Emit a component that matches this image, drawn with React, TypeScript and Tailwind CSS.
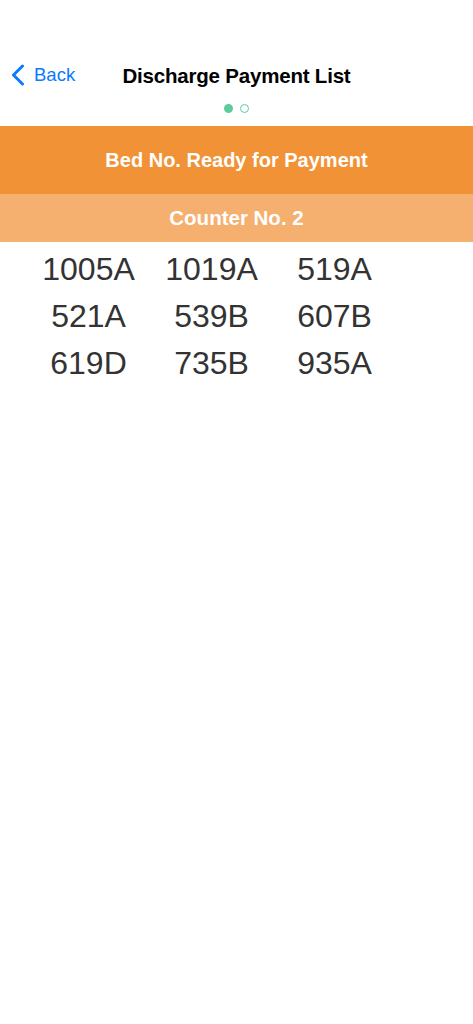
import React from 'react';

const beds = ['1005A', '1019A', '519A', '521A', '539B', '607B', '619D', '735B', '935A'];

export default function App() {
  return (
    <div className="w-[473px] h-[1024px] bg-white font-['Liberation_Sans',Arial,sans-serif]">
      {/* status bar space */}
      <div className="h-[50px]" />

      {/* nav bar */}
      <div className="relative h-[50px] flex items-center justify-center">
        <button className="absolute left-[11px] top-0 h-full flex items-center gap-[9px] text-[#0a7aff]">
          <svg width="14" height="22" viewBox="0 0 14 22" fill="none">
            <path d="M11.5 2 L2.5 11 L11.5 20" stroke="#0a7aff" strokeWidth="3" strokeLinecap="round" strokeLinejoin="round" />
          </svg>
          <span className="text-[18.5px] leading-none">Back</span>
        </button>
        <h1 className="text-[20.5px] font-bold text-black leading-none tracking-[-0.2px] pt-[2px]">Discharge Payment List</h1>
      </div>

      {/* page dots */}
      <div className="h-[26px] flex items-start justify-center gap-[7px] pt-[4px]">
        <span className="w-[9px] h-[9px] rounded-full bg-[#5ecb9c]" />
        <span className="w-[9px] h-[9px] rounded-full border-[1.5px] border-[#5ecb9c]" />
      </div>

      {/* headers */}
      <div className="h-[68px] bg-[#f19236] flex items-center justify-center">
        <span className="text-white text-[20px] font-bold">Bed No. Ready for Payment</span>
      </div>
      <div className="h-[48px] bg-[#f5b070] flex items-center justify-center">
        <span className="text-white text-[20.5px] font-bold">Counter No. 2</span>
      </div>

      {/* bed list */}
      <div className="pl-[27px] pt-[3px] grid grid-cols-[123px_123px_123px]">
        {beds.map((b) => (
          <div key={b} className="h-[47px] flex items-center justify-center text-[32px] text-[#333333] leading-none">
            {b}
          </div>
        ))}
      </div>
    </div>
  );
}
